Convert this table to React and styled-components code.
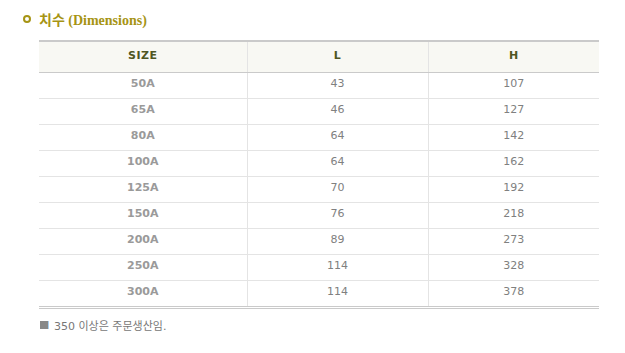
import React from "react";
import styled, { createGlobalStyle } from "styled-components";

const GlobalStyle = createGlobalStyle`
	body {
		margin: 0;
		background: #ffffff;
		font-family: "DejaVu Sans", "Noto Sans CJK KR", sans-serif;
	}
`;

const Page = styled.div`
	width: 625px;
	height: 353px;
	padding: 11px 0 0 0;
	box-sizing: border-box;
`;
const Title = styled.h2`
	display: flex;
	align-items: center;
	gap: 8px;
	margin: 0 0 0 23px;
	height: 16px;
	font-family: "Liberation Serif", "Noto Sans CJK KR", serif;
	font-size: 14px;
	font-weight: 700;
	color: #a69414;
`;
const Ring = styled.span`
	width: 4px;
	height: 4px;
	border: 2px solid #a69414;
	border-radius: 50%;
`;
const Table = styled.table`
	margin: 13px 0 0 39px;
	width: 560px;
	border-collapse: collapse;
	border-top: 2px solid #cacaca;
	border-bottom: 3px double #cacaca;
	table-layout: fixed;
`;
const Head = styled.th`
	height: 26px;
	padding: 0 0 4px;
	background: #f8f8f3;
	border-bottom: 1px solid #cacaca;
	border-left: ${(p) => (p.first ? "none" : "1px solid #e4e4e4")};
	font-family: "DejaVu Sans", sans-serif;
	font-size: 11px;
	font-weight: 700;
	letter-spacing: 0.5px;
	color: #4f5622;
	text-align: center;
`;
const Cell = styled.td`
	height: 21px;
	padding: 0 0 4px;
	border-bottom: 1px solid #e4e4e4;
	border-left: ${(p) => (p.first ? "none" : "1px solid #e4e4e4")};
	font-family: "DejaVu Sans", sans-serif;
	font-size: 11px;
	font-weight: ${(p) => (p.first ? 700 : 400)};
	color: ${(p) => (p.first ? "#9a9a9a" : "#808080")};
	text-align: center;
`;
const Note = styled.p`
	display: flex;
	align-items: center;
	gap: 5px;
	margin: 8px 0 0 40px;
	font-family: "DejaVu Sans", "Noto Sans CJK KR", sans-serif;
	font-size: 11px;
	color: #777777;
`;
const Square = styled.span`
	width: 8px;
	height: 8px;
	background: #888888;
	border-right: 1px solid #a8d0f0;
`;

const rows = [
	["50A", 43, 107],
	["65A", 46, 127],
	["80A", 64, 142],
	["100A", 64, 162],
	["125A", 70, 192],
	["150A", 76, 218],
	["200A", 89, 273],
	["250A", 114, 328],
	["300A", 114, 378],
];

const App = () => {
	return (
		<Page>
			<GlobalStyle />
			<Title>
				<Ring />
				치수 (Dimensions)
			</Title>
			<Table>
				<colgroup>
					<col style={{ width: 208 }} />
					<col style={{ width: 181 }} />
					<col style={{ width: 171 }} />
				</colgroup>
				<thead>
					<tr>
						<Head first>SIZE</Head>
						<Head>L</Head>
						<Head>H</Head>
					</tr>
				</thead>
				<tbody>
					{rows.map(([size, l, h]) => (
						<tr key={size}>
							<Cell first>{size}</Cell>
							<Cell>{l}</Cell>
							<Cell>{h}</Cell>
						</tr>
					))}
				</tbody>
			</Table>
			<Note>
				<Square />
				350 이상은 주문생산임.
			</Note>
		</Page>
	);
};

export default App;
